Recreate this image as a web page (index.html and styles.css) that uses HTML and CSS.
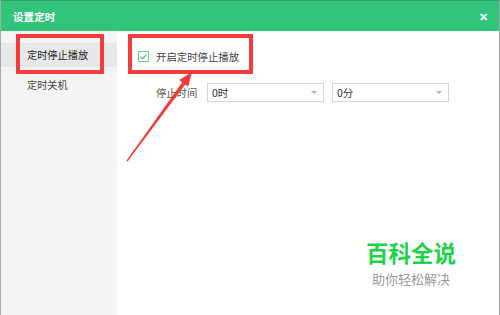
FILE: index.html
```html
<!DOCTYPE html>
<html lang="zh">
<head>
<meta charset="utf-8">
<link rel="stylesheet" href="styles.css">
</head>
<body>
<div class="window">
  <div class="titlebar">
    <span class="title">设置定时</span>
    <span class="close">✕</span>
  </div>
  <div class="main">
    <div class="sidebar">
      <div class="nav-item active">定时停止播放</div>
      <div class="nav-item">定时关机</div>
    </div>
    <div class="content">
      <label class="check-row">
        <span class="checkbox">
          <svg width="9" height="9" viewBox="0 0 9 9"><path d="M1.5 4.6 L3.6 6.6 L7.6 2.4" fill="none" stroke="#3dbd7a" stroke-width="1.2"/></svg>
        </span>
        <span>开启定时停止播放</span>
      </label>
      <div class="time-row">
        <span class="label">停止时间</span>
        <div class="select"><span>0时</span><span class="caret"></span></div>
        <div class="select"><span>0分</span><span class="caret"></span></div>
      </div>
      <div class="watermark">
        <div class="wm-title">百科全说</div>
        <div class="wm-sub">助你轻松解决</div>
      </div>
    </div>
  </div>
  <div class="mark mark-left"></div>
  <div class="mark mark-right"></div>
  <svg class="arrow" width="500" height="315" viewBox="0 0 500 315">
    <polygon points="192,72 188.2,86.6 185.2,84.4 127.6,161.4 126.6,160.6 182.2,82.2 179.2,80" fill="#f43a3a"/>
  </svg>
</div>
</body>
</html>
```
FILE: styles.css
```css
* { box-sizing: border-box; }
html, body { margin: 0; padding: 0; }
body {
  width: 500px;
  height: 315px;
  overflow: hidden;
  font-family: "Noto Sans CJK SC", "Noto Sans", sans-serif;
  background: #fff;
}
.window {
  position: relative;
  width: 500px;
  height: 315px;
  display: flex;
  flex-direction: column;
  border-left: 1px solid #a8a8a8;
  border-right: 1px solid #a8a8a8;
}
.titlebar {
  height: 31px;
  flex: none;
  background: #33c47c;
  border-top: 1px solid #2a9e64;
  display: flex;
  align-items: center;
  justify-content: space-between;
  padding: 0 11px 0 12px;
  color: #fff;
}
.title {
  font-size: 10.5px;
  font-weight: bold;
  letter-spacing: 0.1px;
}
.close {
  font-size: 11px;
  font-weight: bold;
}
.main {
  flex: 1;
  display: flex;
}
.sidebar {
  width: 116px;
  flex: none;
  background: #f4f4f4;
  padding-top: 12px;
  display: flex;
  flex-direction: column;
  gap: 6px;
}
.nav-item {
  height: 24px;
  line-height: 24px;
  padding-left: 26px;
  font-size: 10.2px;
  color: #444;
}
.nav-item.active {
  background: #e8e8e8;
  color: #222;
}
.content {
  flex: 1;
  position: relative;
  padding: 19px 0 0 21px;
}
.check-row {
  display: flex;
  align-items: center;
  height: 12px;
  font-size: 10.4px;
  color: #444;
  gap: 7px;
}
.checkbox {
  width: 11px;
  height: 11px;
  border: 1px solid #6ccb98;
  display: flex;
  align-items: center;
  justify-content: center;
}
.time-row {
  display: flex;
  align-items: center;
  margin-top: 21px;
  padding-left: 18px;
  font-size: 10.3px;
  color: #555;
}
.label {
  width: 51px;
}
.select {
  width: 117px;
  height: 19px;
  border: 1px solid #d4d4d4;
  background: #fff;
  display: flex;
  align-items: center;
  justify-content: space-between;
  padding: 0 6px 0 4px;
  margin-right: 8px;
  font-size: 10.5px;
  color: #333;
}
.caret {
  width: 0;
  height: 0;
  border-left: 3px solid transparent;
  border-right: 3px solid transparent;
  border-top: 3px solid #b0b0b0;
}
.watermark {
  position: absolute;
  left: 249px;
  top: 204.5px;
  text-align: center;
}
.wm-title {
  font-size: 22.5px;
  line-height: 33px;
  font-weight: bold;
  color: #1ed24a;
}
.wm-sub {
  font-size: 13px;
  line-height: 19px;
  color: #9a9a9a;
}
.mark {
  position: absolute;
  border: 4px solid #f63b3b;
}
.mark-left {
  left: 15px;
  top: 34px;
  width: 88px;
  height: 40px;
}
.mark-right {
  left: 127px;
  top: 34px;
  width: 125px;
  height: 40px;
}
.arrow {
  position: absolute;
  left: -1px;
  top: 0;
}
```
